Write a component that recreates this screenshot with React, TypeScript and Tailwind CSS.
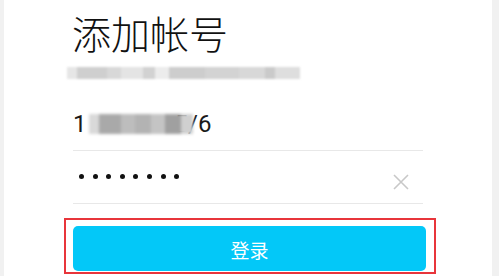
import React from "react";

const subtitleCells = [
  { w: 10, c: "bg-[#e6e6e6]" },
  { w: 30, c: "bg-[#cfcfcf]" },
  { w: 14, c: "bg-[#d8d8d8]" },
  { w: 22, c: "bg-[#e4e4e4]" },
  { w: 12, c: "bg-[#d2d2d2]" },
  { w: 14, c: "bg-[#ececec]" },
  { w: 36, c: "bg-[#cdcdcd]" },
  { w: 34, c: "bg-[#d3d3d3]" },
  { w: 26, c: "bg-[#d8d8d8]" },
  { w: 10, c: "bg-[#cacaca]" },
  { w: 25, c: "bg-[#dedede]" },
];

const phoneCells = [
  { w: 10, c: "bg-[#d9d9d9]" },
  { w: 22, c: "bg-[#a9a9a9]" },
  { w: 14, c: "bg-[#bdbdbd]" },
  { w: 16, c: "bg-[#b3b3b3]" },
  { w: 14, c: "bg-[#c4c4c4]" },
  { w: 16, c: "bg-[#a0a0a0]" },
  { w: 12, c: "bg-[#d0d0d0]" },
];

const App = () => {
  return (
    <div
      className="w-[499px] h-[276px] overflow-hidden bg-[#f1f1f1] flex"
      style={{ fontFamily: '"Noto Sans CJK SC", "Noto Sans", sans-serif' }}
    >
      <div className="ml-[4px] w-[488px] bg-white flex flex-col">
        <div className="pl-[68px] pt-[3px] text-[39px] leading-[58px] font-light text-[#111]">
          添加帐号
        </div>

        {/* blurred hint line */}
        <div className="ml-[63px] mt-[6px] flex h-[12px] blur-[1px]">
          {subtitleCells.map((cell, i) => (
            <div key={i} className={cell.c} style={{ width: cell.w }} />
          ))}
        </div>

        {/* phone number */}
        <div className="mx-[69px] mt-[27px] h-[45px] border-b border-[#e8e8e8] flex items-start">
          <div
            className="flex items-center text-[24px] leading-[32px] text-[#1a1a1a] pt-[2px]"
            style={{ fontFamily: '"Roboto", "Noto Sans", sans-serif' }}
          >
            <span>1</span>
            <div className="flex h-[20px] ml-[2px] -mr-[18px] blur-[1.5px] relative z-10">
              {phoneCells.map((cell, i) => (
                <div key={i} className={cell.c} style={{ width: cell.w }} />
              ))}
            </div>
            <span>5/6</span>
          </div>
        </div>

        {/* password */}
        <div className="mx-[69px] h-[53px] border-b border-[#e8e8e8] flex items-center justify-between">
          <div className="flex gap-[8.6px] pl-[6px] -mt-[2px]">
            {Array.from({ length: 8 }).map((_, i) => (
              <div key={i} className="w-[5px] h-[5px] rounded-full bg-[#111]" />
            ))}
          </div>
          <svg
            width="16"
            height="16"
            viewBox="0 0 16 16"
            className="mr-[14px] mt-[10px]"
          >
            <path d="M1 1 L15 15 M15 1 L1 15" stroke="#c8c8c8" strokeWidth="1.6" />
          </svg>
        </div>

        {/* login */}
        <div className="ml-[60px] mt-[14px] w-[372px] h-[56px] border-[2px] border-[#e8353b] pl-[7px] pr-[8px] pt-[6px] pb-[1px]">
          <button className="w-full h-full rounded-[5px] bg-[#03c8f8] text-white text-[19px] pt-[3px] flex items-center justify-center">
            登录
          </button>
        </div>
      </div>
    </div>
  );
};

export default App;
